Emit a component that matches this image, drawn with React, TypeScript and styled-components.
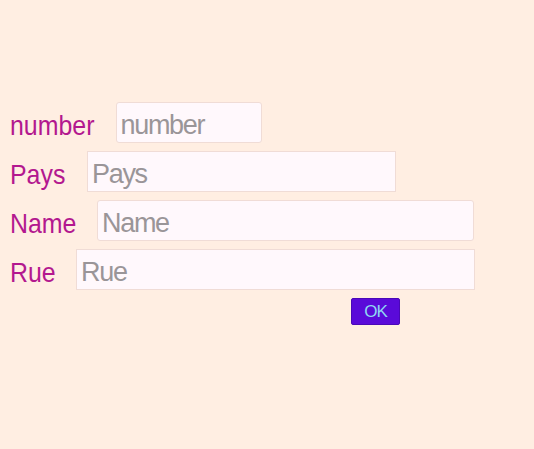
import React from "react";
import styled, { createGlobalStyle } from "styled-components";

const Global = createGlobalStyle`
  html, body { margin: 0; padding: 0; background: #ffeee2; }
  body { font-family: "Liberation Sans", Arial, sans-serif; }
`;

const Page = styled.div`
  min-height: 449px;
  background: #ffeee2;
  padding: 102px 0 0 10px;
  box-sizing: border-box;
`;

const Form = styled.form`
  display: flex;
  flex-direction: column;
  gap: 8px;
  align-items: flex-start;
`;

const Row = styled.div`
  display: flex;
  align-items: center;
  gap: 20.5px;
`;

const Label = styled.label<{ $w: number }>`
  display: inline-block;
  width: ${(p) => p.$w}px;
  white-space: nowrap;
  font-size: 28px;
  color: #b3188f;
  line-height: 1;
  padding-top: 7px;
  transform: scaleX(0.89);
  transform-origin: left center;
`;

const Input = styled.input<{ $w: number; $round?: boolean }>`
  width: ${(p) => p.$w}px;
  height: 41px;
  box-sizing: border-box;
  border: 1px solid #f0dcd6;
  border-radius: ${(p) => (p.$round ? "3px" : "0")};
  background: #fff8fc;
  padding: 6px 4px 0;
  font-family: "Liberation Sans", Arial, sans-serif;
  font-size: 27px;
  letter-spacing: -1.3px;
  color: #333;
  outline: none;
  &::placeholder { color: #9a9598; }
`;

const Button = styled.button`
  margin-left: 341px;
  width: 49px;
  height: 27px;
  box-sizing: border-box;
  border: 1px solid #4a08b8;
  border-radius: 2px;
  background: #5a0ad9;
  color: #8fd6f2;
  font-family: "Liberation Sans", Arial, sans-serif;
  font-size: 17px;
  padding: 1px 0 0;
  letter-spacing: -1px;
`;

const fields = [
  { name: "number", w: 85, iw: 146, round: true },
  { name: "Pays", w: 56.5, iw: 309, round: false },
  { name: "Name", w: 66.5, iw: 377, round: true },
  { name: "Rue", w: 45.5, iw: 399, round: false },
];

export default function App() {
  return (
    <>
      <Global />
      <Page>
        <Form onSubmit={(e) => e.preventDefault()}>
          {fields.map((f) => (
            <Row key={f.name}>
              <Label $w={f.w}>{f.name}</Label>
              <Input $w={f.iw} $round={f.round} placeholder={f.name} />
            </Row>
          ))}
          <Button type="submit">OK</Button>
        </Form>
      </Page>
    </>
  );
}
